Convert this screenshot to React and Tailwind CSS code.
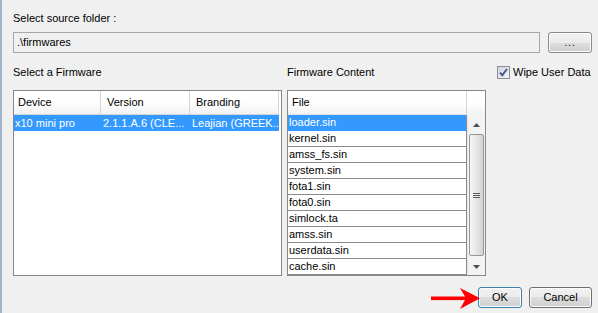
export default function App() {
  const files = [
    "loader.sin",
    "kernel.sin",
    "amss_fs.sin",
    "system.sin",
    "fota1.sin",
    "fota0.sin",
    "simlock.ta",
    "amss.sin",
    "userdata.sin",
    "cache.sin",
  ];
  const btn =
    "flex items-center justify-center rounded-[3px] border bg-[linear-gradient(#f2f2f2_0%,#ebebeb_50%,#dddddd_50%,#cfcfcf_100%)] shadow-[inset_0_0_0_1px_#fcfcfc]";
  return (
    <div className="w-[598px] h-[313px] overflow-hidden bg-[#f0f0f0] border-l-2 border-[#9fb3cb] pl-[11px] pr-[6px] text-[11px] leading-[13px] text-black font-[family-name:Liberation_Sans,Arial,sans-serif]">
      {/* label */}
      <div className="pt-[12px] h-[25px]">Select source folder :</div>

      {/* folder row */}
      <div className="mt-[7px] flex h-[21px] gap-[8px]">
        <div className="w-[529px] h-full flex items-center border border-[#a7a7a7] bg-[#f0f0f0] pl-[3px]">
          .\firmwares
        </div>
        <div className={`${btn} w-[44px] h-full border-[#8a8a8a] text-[10px] tracking-[1px]`}>
          ...
        </div>
      </div>

      {/* labels row */}
      <div className="mt-[13px] flex h-[13px] items-center">
        <div className="w-[274px]">Select a Firmware</div>
        <div className="w-[210px]">Firmware Content</div>
        <div className="flex items-center gap-[3px]">
          <div className="w-[13px] h-[13px] border border-[#8e8f8f] bg-[linear-gradient(135deg,#cdd3df,#f4f6fa)] flex items-center justify-center">
            <svg width="11" height="11" viewBox="0 0 11 11">
              <path d="M2 5.5 L4.3 8.3 L9 2" fill="none" stroke="#3f5285" strokeWidth="1.8" />
            </svg>
          </div>
          <span>Wipe User Data</span>
        </div>
      </div>

      {/* lists */}
      <div className="mt-[11px] flex h-[186px] gap-[5px]">
        {/* firmware table */}
        <div className="w-[269px] h-full border border-[#828790] bg-white">
          <div className="flex h-[24px] w-[265px] bg-[linear-gradient(#ffffff_0%,#ffffff_45%,#f1f2f4_100%)] border-b border-[#d5d5d5]">
            <div className="w-[87px] flex items-center pl-[4px] border-r border-[#d5d5d5]">Device</div>
            <div className="w-[89px] flex items-center pl-[6px] border-r border-[#d5d5d5]">Version</div>
            <div className="w-[89px] flex items-center pl-[6px] border-r border-[#d5d5d5]">Branding</div>
          </div>
          <div className="flex h-[16px] w-[265px] items-center bg-[#3399ff] text-white whitespace-nowrap">
            <div className="w-[87px] pl-[1px]">x10 mini pro</div>
            <div className="w-[89px] pl-[2px]">2.1.1.A.6 (CLE...</div>
            <div className="w-[89px] pl-[2px]">Leajian (GREEK...</div>
          </div>
        </div>

        {/* firmware content */}
        <div className="w-[199px] h-full border border-[#828790] bg-white flex flex-col">
          <div className="flex h-[24px] shrink-0 bg-[linear-gradient(#ffffff_0%,#ffffff_45%,#f1f2f4_100%)]">
            <div className="w-[179px] flex items-center pl-[4px] border-r border-[#d5d5d5] border-b border-b-[#e3e3e3]">
              File
            </div>
            <div className="flex-1" />
          </div>
          <div className="flex flex-1">
            <div className="w-[179px] flex flex-col">
              {files.map((f, i) => (
                <div
                  key={f}
                  className={`h-[16px] flex items-center pl-[1px] border-r border-b ${
                    i === 0
                      ? "bg-[#3399ff] text-white border-[#3399ff] border-r-[#8c8c8c]"
                      : "border-[#8c8c8c]"
                  }`}
                >
                  {f}
                </div>
              ))}
            </div>
            {/* scrollbar */}
            <div className="flex-1 flex flex-col bg-[#f3f3f3] border-l border-[#e6e6e6]">
              <div className="h-[19px] flex items-center justify-center">
                <svg width="7" height="4" viewBox="0 0 7 4">
                  <path d="M0 4 L3.5 0 L7 4 Z" fill="#505050" />
                </svg>
              </div>
              <div className="h-[122px] mx-[1px] rounded-[2px] border border-[#979797] bg-[linear-gradient(90deg,#f5f5f5,#e6e6e6_50%,#d2d2d2)] flex items-center justify-center">
                <svg width="7" height="7" viewBox="0 0 7 7">
                  <path d="M0 1.5 H7 M0 3.5 H7 M0 5.5 H7" stroke="#5a5a5a" strokeWidth="1" />
                </svg>
              </div>
              <div className="flex-1" />
              <div className="h-[17px] flex items-center justify-center">
                <svg width="7" height="4" viewBox="0 0 7 4">
                  <path d="M0 0 L3.5 4 L7 0 Z" fill="#505050" />
                </svg>
              </div>
            </div>
          </div>
        </div>
      </div>

      {/* footer */}
      <div className="mt-[11px] relative flex h-[21px] justify-end gap-[7px]">
        <div className={`${btn} w-[44px] h-full border-[#3c7fb1] shadow-[inset_0_0_0_1px_#c5e8fa]`}>OK</div>
        <div className={`${btn} w-[63px] h-full border-[#707070]`}>Cancel</div>
        <svg
          className="absolute left-[418px] top-[1px]"
          width="50"
          height="21"
          viewBox="0 0 50 21"
        >
          <rect x="0" y="8.5" width="38" height="3.6" fill="#ff0000" />
          <path d="M29 0 L49 10.3 L29 21 L35 10.3 Z" fill="#ff0000" />
        </svg>
      </div>
    </div>
  );
}
